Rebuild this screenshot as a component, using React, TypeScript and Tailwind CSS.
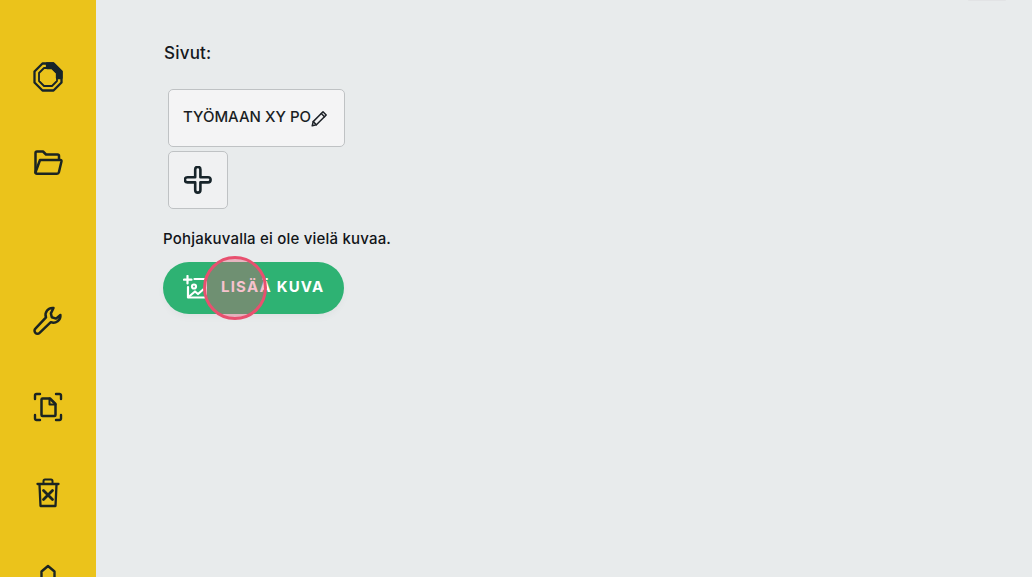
import React from "react";

const font = "font-['Inter','Liberation_Sans',sans-serif]";

const RingIcon = () => (
  <svg width="30" height="30" viewBox="0 0 30 30" fill="none" stroke="#17242a" strokeWidth="2.300" strokeLinejoin="round">
    <path d="M9.500 1.500h11l8 8v11l-8 8h-11l-8-8v-11z" />
    <path d="M11 6h8l5 5v8l-5 5h-8l-5-5v-8z" strokeWidth="1.800" />
    <path d="M14 1.500h6.500l8 8V16H24v-5l-5-5h-5z" fill="#17242a" />
  </svg>
);

const FolderIcon = () => (
  <svg width="30" height="26" viewBox="0 0 30 26" fill="none" stroke="#1b2422" strokeWidth="2.500" strokeLinejoin="round" strokeLinecap="round">
    <path d="M2.500 22.500V3a1.500 1.500 0 0 1 1.500-1.500h6l3 3h11.500A1.500 1.500 0 0 1 26 6v3" />
    <path d="M7 10h20.500a1 1 0 0 1 1 1.200l-2.600 11a2 2 0 0 1-2 1.500H4a1.500 1.500 0 0 1-1.500-1.500z" />
  </svg>
);

const WrenchIcon = () => (
  <svg width="30" height="30" viewBox="0 0 30 30" fill="none" stroke="#1b2422" strokeWidth="2.500" strokeLinejoin="round" strokeLinecap="round">
    <path d="M20.500 2a7 7 0 0 0-7.500 9.400L2.400 22.600a2.900 2.900 0 0 0 4.200 4.200l11.200-10.600A7 7 0 0 0 27.400 9l-4.400 3.600-4.200-1.300-.9-3.900z" />
  </svg>
);

const ScanFileIcon = () => (
  <svg width="30" height="30" viewBox="0 0 30 30" fill="none" stroke="#1b2422" strokeLinejoin="round" strokeLinecap="round">
    <g strokeWidth="2.400">
      <path d="M2 7V3.500A1.500 1.500 0 0 1 3.500 2H7" />
      <path d="M23 2h3.500A1.500 1.500 0 0 1 28 3.500V7" />
      <path d="M2 23v3.500A1.500 1.500 0 0 0 3.500 28H7" />
      <path d="M28 23v3.500a1.500 1.500 0 0 1-1.500 1.500H23" />
    </g>
    <path d="M8.500 7.500a1 1 0 0 1 1-1H17l5.500 5.500v11a1 1 0 0 1-1 1h-12a1 1 0 0 1-1-1z" strokeWidth="2.500" />
    <path d="M16.500 6.500v6h6" strokeWidth="2" />
  </svg>
);

const TrashIcon = () => (
  <svg width="24" height="30" viewBox="0 0 24 30" fill="none" stroke="#1b2422" strokeLinejoin="round" strokeLinecap="round">
    <path d="M1.500 6h21" strokeWidth="2.300" />
    <path d="M7.500 5.500V3a1.500 1.500 0 0 1 1.500-1.500h6A1.500 1.500 0 0 1 16.500 3v2.500" strokeWidth="2" />
    <path d="M3.500 6.500l1 21.500h15l1-21.500" strokeWidth="2.300" />
    <path d="M7.500 12.500l9 9M16.500 12.500l-9 9" strokeWidth="2.800" />
  </svg>
);

const HouseIcon = () => (
  <svg width="16" height="30" viewBox="0 0 16 30" fill="none" stroke="#1b2422" strokeWidth="2.400" strokeLinejoin="round">
    <path d="M1.500 28V7.500L8 2l6.500 5.500V28z" />
  </svg>
);

const PencilIcon = () => (
  <svg width="17" height="17" viewBox="0 0 17 17" fill="none" stroke="#1d2228" strokeWidth="1.500" strokeLinejoin="round" strokeLinecap="round">
    <path d="M1.200 15.800l1-4.200L12 1.800l3.200 3.200-9.800 9.800z" />
    <path d="M10.300 3.500l3.200 3.200M2.200 11.600l3.200 3.200" />
  </svg>
);

const PlusIcon = () => (
  <svg width="28" height="28" viewBox="0 0 28 28" fill="none" stroke="#17242a" strokeWidth="2.600" strokeLinejoin="round">
    <path d="M11.200 3.500a2.600 2.600 0 0 1 5.200 0v7.700H24a2.600 2.600 0 0 1 0 5.200h-7.600V24a2.600 2.600 0 0 1-5.200 0v-7.600H3.500a2.600 2.600 0 0 1 0-5.200h7.700z" />
  </svg>
);

const AddImageIcon = () => (
  <svg width="24" height="24" viewBox="0 0 24 24" fill="none" stroke="#ffffff" strokeWidth="2.200" strokeLinecap="round" strokeLinejoin="round">
    <path d="M4.500 1v7.500M1 4.700h7.500" />
    <path d="M11.500 4h11.500v18.500H5V12" />
    <circle cx="11" cy="11.500" r="2" />
    <path d="M5.500 22l6.500-5.500 3 2.500 7.500-6.500" />
  </svg>
);

const SideItem = ({ children }: { children: React.ReactNode }) => (
  <div className="h-[86px] shrink-0 flex items-center justify-center">{children}</div>
);

export default function App() {
  return (
    <div className={`relative flex h-[577px] w-[1032px] overflow-hidden bg-[#e8ebec] ${font}`}>
      <aside className="w-[96px] shrink-0 bg-[#ebc31b] pt-[34px]">
        <SideItem><RingIcon /></SideItem>
        <SideItem><FolderIcon /></SideItem>
        <div className="h-[72px]" />
        <SideItem><WrenchIcon /></SideItem>
        <SideItem><ScanFileIcon /></SideItem>
        <SideItem><TrashIcon /></SideItem>
        <SideItem><HouseIcon /></SideItem>
      </aside>

      <main className="flex-1 pl-[68px] pt-[43px]">
        <p className="text-[17px] leading-[21px] font-medium tracking-[0.2px] text-[#15191d]">Sivut:</p>

        <div className="mt-[25px] ml-[4px] flex h-[58px] w-[177px] items-center rounded-[5px] border border-[#bfc2c4] bg-[#f4f4f5] pb-[2px] pl-[14px]">
          <span className="whitespace-nowrap text-[15px] font-medium tracking-[0px] text-[#1a1e24]">TYÖMAAN XY PO</span>
          <span className="mt-[2px]"><PencilIcon /></span>
        </div>

        <div className="mt-[4px] ml-[4px] flex h-[58px] w-[60px] items-center justify-center rounded-[5px] border border-[#bfc2c4] bg-[#f0f1f2]">
          <PlusIcon />
        </div>

        <p className="mt-[20px] -ml-[1px] text-[15px] leading-[20px] font-medium tracking-[0.2px] text-[#111418]">Pohjakuvalla ei ole vielä kuvaa.</p>

        <button className="mt-[13px] -ml-[1px] flex h-[52px] w-[181px] items-center rounded-full bg-[#2eb273] pb-[2px] pl-[20px] shadow-[0_4px_8px_-2px_rgba(0,0,0,0.05)]">
          <AddImageIcon />
          <span className="ml-[14px] whitespace-nowrap text-[15px] font-bold tracking-[1.2px] text-white">LISÄÄ KUVA</span>
        </button>
      </main>

      {/* click marker over the button */}
      <div className="absolute left-[203px] top-[256px] h-[64px] w-[64px] rounded-full border-[3px] border-[#e8506f] bg-[#e8506f]/35" />
      <div className="absolute left-[968px] top-0 h-[1px] w-[38px] rounded-b bg-[#e2e3e5]" />
    </div>
  );
}
